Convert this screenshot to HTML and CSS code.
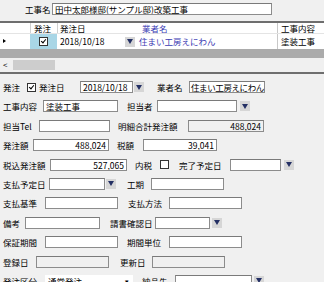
FILE: index.html
```html
<!DOCTYPE html>
<html lang="ja">
<head>
    <meta charset="UTF-8">
    <title>発注入力</title>
    <link rel="stylesheet" href="styles.css">
</head>
<body>

    <!-- 工事名 -->
    <div class="top">
        <span class="lbl w27">工事名</span>
        <span class="box w220">田中太郎様邸(サンプル邸)改築工事</span>
    </div>

    <div class="splitter"></div>

    <!-- 発注一覧 -->
    <div class="grid">
        <div class="ghead">
            <span class="c-rh"></span>
            <span class="c-chk">発注</span>
            <span class="c-date">発注日</span>
            <span class="c-vendor">業者名</span>
            <span class="c-work">工事内容</span>
        </div>
        <div class="grow">
            <span class="c-rh"><span class="cursor"></span></span>
            <span class="c-chk"><span class="chk on"></span></span>
            <span class="c-date">2018/10/18<span class="dd"></span></span>
            <span class="c-vendor">住まい工房えにわん</span>
            <span class="c-work">塗装工事</span>
        </div>
    </div>
    <div class="gband"></div>
    <div class="hscroll">
        <span class="arrow">&lt;</span>
        <span class="thumb"></span>
    </div>

    <div class="splitter gap"></div>

    <!-- 入力フォーム -->
    <div class="form">
        <div class="row">
            <span class="lbl w24">発注</span><span class="chk on"></span>
            <span class="lbl w41 ml3">発注日</span><span class="box w53">2018/10/18</span><span class="dd ml1"></span>
            <span class="lbl w32 ml13">業者名</span><span class="box tight w76">住まい工房えにわん</span>
        </div>
        <div class="row">
            <span class="lbl w40">工事内容</span><span class="box w75">塗装工事</span>
            <span class="lbl w30 ml9">担当者</span><span class="box w80"></span><span class="dd ml3"></span>
        </div>
        <div class="row">
            <span class="lbl w36">担当Tel</span><span class="box w71"></span>
            <span class="lbl w70 ml8">明細合計発注額</span><span class="box ro num w76">488,024</span>
        </div>
        <div class="row">
            <span class="lbl w30">発注額</span><span class="box num w76">488,024</span>
            <span class="lbl w26 ml8">税額</span><span class="box num w74">39,041</span>
        </div>
        <div class="row">
            <span class="lbl w47">税込発注額</span><span class="box num w77">527,065</span>
            <span class="lbl w25 ml8">内税</span><span class="chk"></span>
            <span class="lbl w51 ml10">完了予定日</span><span class="box w51"></span><span class="dd ml3"></span>
        </div>
        <div class="row">
            <span class="lbl w46">支払予定日</span><span class="box w56"></span><span class="dd ml1"></span>
            <span class="lbl w24 ml11">工期</span><span class="box w73"></span>
        </div>
        <div class="row">
            <span class="lbl w42">支払基準</span><span class="box w73"></span>
            <span class="lbl w41 ml10">支払方法</span><span class="box w73"></span>
        </div>
        <div class="row">
            <span class="lbl w22">備考</span><span class="box w75"></span>
            <span class="lbl w45 ml10">請書確認日</span><span class="box w55"></span><span class="dd ml2"></span>
        </div>
        <div class="row">
            <span class="lbl w42">保証期間</span><span class="box w73"></span>
            <span class="lbl w42 ml9">期間単位</span><span class="box w73"></span>
        </div>
        <div class="row">
            <span class="lbl w33">登録日</span><span class="box ro w73"></span>
            <span class="lbl w32 ml11">更新日</span><span class="box ro w73"></span>
        </div>
        <div class="row">
            <span class="lbl w42">発注区分</span><span class="combo w88">通常発注<span class="caret">▾</span></span>
            <span class="lbl w33 ml9">納品先</span><span class="box w77"></span><span class="dd ml2"></span>
        </div>
    </div>

</body>
</html>
```

FILE: styles.css
```css
/* Base */
body {
    margin: 0;
    width: 324px;
    height: 282px;
    overflow: hidden;
    background-color: #f0f0f0;
    color: #000;
    font-family: "Noto Sans CJK JP", "Noto Sans", sans-serif;
    font-size: 8.5px;
}

/* 工事名 */
.top {
    height: 21px;
    box-sizing: border-box;
    padding: 3px 0 0 25px;
    display: flex;
}

.splitter {
    height: 2px;
    background-color: #6e6e6e;
}

.splitter.gap {
    margin-top: 1px;
}

/* Grid */
.grid {
    background-color: #fff;
}

.ghead, .grow {
    display: flex;
    white-space: nowrap;
}

.ghead {
    height: 10px;
    line-height: 10px;
    border-bottom: 1px solid #e4e4e4;
}

.grow {
    height: 15px;
    line-height: 15px;
}

.c-rh { width: 30px; position: relative; }
.c-chk { width: 27px; box-sizing: border-box; border-left: 1px solid #d0d0d0; }
.c-date { width: 79px; box-sizing: border-box; border-left: 1px solid #d0d0d0; padding-left: 2px; }
.c-vendor { width: 141px; box-sizing: border-box; padding-left: 3px; color: #3b3bb3; }
.c-work { flex: 1; box-sizing: border-box; border-left: 1px solid #c8c8c8; padding-left: 3px; }

.ghead .c-chk { padding-left: 3px; }
.ghead .c-vendor { padding-left: 6px; }

.grow .c-chk {
    background-color: #a9d6e6;
    display: flex;
    align-items: center;
    justify-content: center;
    border-left: none;
}

.grow .c-date {
    display: flex;
    align-items: center;
    border-left: none;
    padding-left: 3px;
}

.grow .c-date .dd {
    margin-left: auto;
    margin-right: 1px;
}

.cursor {
    position: absolute;
    left: 3px;
    top: 5px;
    border-top: 2.5px solid transparent;
    border-bottom: 2.5px solid transparent;
    border-left: 3.5px solid #000;
}

.gband {
    height: 9px;
    background-color: #ababab;
}

.hscroll {
    height: 13px;
    display: flex;
    align-items: center;
    padding-left: 3px;
}

.arrow {
    width: 10px;
    font-size: 8px;
    line-height: 13px;
}

.thumb {
    width: 42px;
    height: 10px;
    background-color: #cdcdcd;
}

/* Form */
.form {
    display: flex;
    flex-direction: column;
    gap: 7.4px;
    padding: 7px 0 0 3px;
}

.row {
    display: flex;
    align-items: center;
    height: 12px;
}

.lbl {
    line-height: 12px;
    white-space: nowrap;
    flex: none;
}

.box {
    flex: none;
    box-sizing: border-box;
    height: 12px;
    line-height: 10px;
    padding: 0 2px;
    border: 1px solid #8c8c8c;
    border-top-color: #7a7a7a;
    background-color: #fff;
    white-space: nowrap;
    overflow: hidden;
}

.box.num { text-align: right; }
.box.ro { background-color: #f0f0f0; }
.box.tight { padding: 0 1px; letter-spacing: -0.4px; }

.combo {
    flex: none;
    position: relative;
    height: 12px;
    line-height: 12px;
    padding-left: 3px;
    box-sizing: border-box;
    background-color: #fff;
}

.caret {
    position: absolute;
    right: 4px;
    top: 0;
    font-size: 7px;
}

/* Dropdown button */
.dd {
    flex: none;
    width: 10px;
    height: 10px;
    background-color: #d6d6d6;
    display: flex;
    align-items: center;
    justify-content: center;
}

.dd::after {
    content: "";
    border-left: 3px solid transparent;
    border-right: 3px solid transparent;
    border-top: 5px solid #243064;
}

/* Checkbox */
.chk {
    flex: none;
    position: relative;
    width: 9px;
    height: 9px;
    box-sizing: border-box;
    border: 1px solid #333;
    background-color: #fff;
}

.chk.on::after {
    content: "";
    position: absolute;
    left: 2px;
    top: 0;
    width: 2px;
    height: 4px;
    border-right: 1.5px solid #000;
    border-bottom: 1.5px solid #000;
    transform: rotate(40deg);
}

/* Sizes */
.w22 { width: 22px; }
.w24 { width: 24px; }
.w25 { width: 25px; }
.w26 { width: 26px; }
.w27 { width: 27px; }
.w30 { width: 30px; }
.w32 { width: 32px; }
.w33 { width: 33px; }
.w36 { width: 36px; }
.w40 { width: 40px; }
.w41 { width: 41px; }
.w42 { width: 42px; }
.w45 { width: 45px; }
.w46 { width: 46px; }
.w47 { width: 47px; }
.w51 { width: 51px; }
.w53 { width: 53px; }
.w55 { width: 55px; }
.w56 { width: 56px; }
.w70 { width: 70px; }
.w71 { width: 71px; }
.w73 { width: 73px; }
.w74 { width: 74px; }
.w75 { width: 75px; }
.w76 { width: 76px; }
.w77 { width: 77px; }
.w80 { width: 80px; }
.w88 { width: 88px; }
.w220 { width: 220px; }

.ml1 { margin-left: 1px; }
.ml2 { margin-left: 2px; }
.ml3 { margin-left: 3px; }
.ml8 { margin-left: 8px; }
.ml9 { margin-left: 9px; }
.ml10 { margin-left: 10px; }
.ml11 { margin-left: 11px; }
.ml13 { margin-left: 13px; }
```
